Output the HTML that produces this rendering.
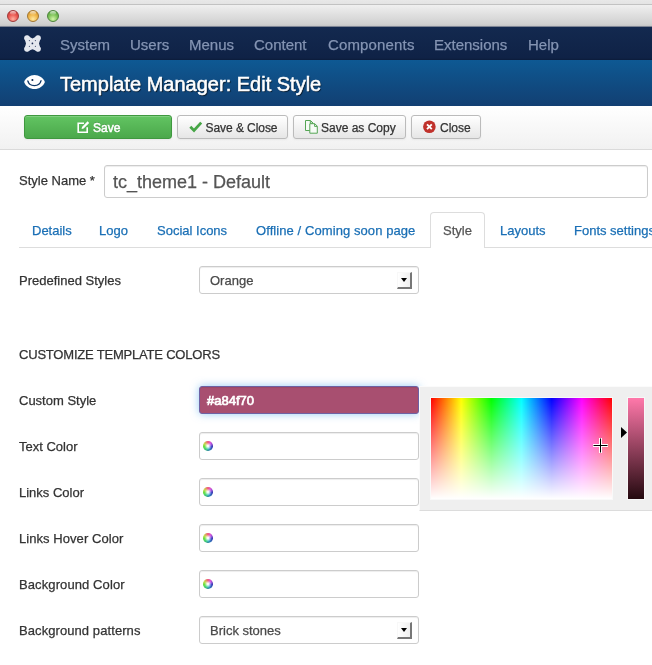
<!DOCTYPE html>
<html lang="en">
<head>
<meta charset="utf-8">
<title>Template Manager: Edit Style</title>
<style>
html,body{margin:0;padding:0;}
body{width:652px;height:665px;overflow:hidden;background:#fff;position:relative;
  font-family:"Liberation Sans",Arial,Helvetica,sans-serif;font-size:13px;color:#333;-webkit-text-stroke:.25px;}
.abs{position:absolute;}
/* mac title bar */
#titlebar{left:0;top:0;width:652px;height:26px;
  background:linear-gradient(#e8e8e8 0,#e4e4e4 3.5px,#c2c2c2 4px,#c2c2c2 4.6px,#f0f0f0 5px,#e9e9e9 9px,#d0d0d0 24px,#c6c6c6 26px);}
.tl{position:absolute;top:10px;width:12px;height:12px;border-radius:50%;box-sizing:border-box;}
.tl:after{content:"";position:absolute;left:2px;top:0;width:6px;height:4px;border-radius:50%;background:linear-gradient(rgba(255,255,255,.75),rgba(255,255,255,.05));}
#tl-r{left:7px;background:radial-gradient(circle at 50% 80%,#ffb0a0 0,#ea5750 50%,#c3342f 100%);border:1px solid #9f3a3a;}
#tl-y{left:27px;background:radial-gradient(circle at 50% 80%,#ffe9a0 0,#efb548 50%,#c98a26 100%);border:1px solid #a27630;}
#tl-g{left:47px;background:radial-gradient(circle at 50% 80%,#d4f5a8 0,#7cc257 50%,#4a9634 100%);border:1px solid #4d843c;}
/* navbar */
#navbar{left:0;top:26px;width:652px;height:34px;background:linear-gradient(#7d8494 0,#7d8494 1px,#13294f 1px,#0f2246 32px,#0b1b3a 34px);}
.nav{position:absolute;top:36px;font-size:15px;line-height:17px;color:#8494b3;white-space:nowrap;}
/* header */
#header{left:0;top:60px;width:652px;height:46px;background:linear-gradient(#0e5993,#123f72);}
#title{left:60px;top:71px;font-size:20px;line-height:26px;color:#fff;white-space:nowrap;
  text-shadow:1px 1px 1px rgba(0,0,0,.75);-webkit-text-stroke:.55px #fff;}
/* toolbar */
#toolbar{left:0;top:106px;width:652px;height:43px;background:linear-gradient(#fff,#f1f1f1);border-bottom:1px solid #dadada;box-sizing:content-box;}
.btn{position:absolute;top:115px;height:24px;box-sizing:border-box;border:1px solid #bbb;border-radius:3px;
  background:linear-gradient(#fff,#e6e6e6);font-size:12px;line-height:22px;color:#333;white-space:nowrap;
  box-shadow:inset 0 1px 0 rgba(255,255,255,.2),0 1px 2px rgba(0,0,0,.05);}
.btn span{position:absolute;top:1px;}
.btn svg{position:absolute;}
#b-save{left:24px;width:148px;background:linear-gradient(#62c462,#4ba84b);border-color:#3f983f;color:#fff;}
#b-sc{left:177px;width:111px;}
#b-copy{left:293px;width:113px;}
#b-close{left:411px;width:70px;}
/* form */
.lbl{position:absolute;left:19px;font-size:13px;line-height:18px;color:#333;white-space:nowrap;}
.inp{position:absolute;left:199px;width:220px;height:28px;box-sizing:border-box;border:1px solid #ccc;border-radius:3px;background:#fff;
  box-shadow:inset 0 1px 1px rgba(0,0,0,.075);}
.inp .val{position:absolute;left:10px;top:5px;font-size:13px;line-height:18px;color:#4a4a4a;white-space:nowrap;}
.sel-btn{position:absolute;right:6px;top:5px;width:15px;height:17px;box-sizing:border-box;background:linear-gradient(to right,#fff,#f0f0f0);
  border-right:2px solid #777;border-bottom:2px solid #777;border-top:1px solid #f8f8f8;border-left:1px solid #f8f8f8;}
.sel-btn:after{content:"";position:absolute;left:3px;top:5px;border-left:3.5px solid transparent;border-right:3.5px solid transparent;border-top:4px solid #000;}
.wheel{position:absolute;left:3px;top:8px;width:9.5px;height:9.5px;border-radius:50%;
  background:radial-gradient(circle,#fff 0,rgba(255,255,255,.9) 12%,rgba(255,255,255,0) 48%),conic-gradient(#f4577c 0,#d95be6 12%,#4f55d8 28%,#45b5d8 45%,#45d888 58%,#66e044 72%,#c8d850 85%,#f4577c 100%);
  box-shadow:inset -1px -1px 1px rgba(0,0,80,.3);}
/* tabs */
.tab{position:absolute;top:222px;font-size:13px;line-height:18px;color:#1a6fb5;white-space:nowrap;}
#tabline{left:19px;top:247px;width:633px;height:1px;background:#ddd;}
#tab-active{left:430px;top:212px;width:55px;height:36px;box-sizing:border-box;border:1px solid #ddd;border-bottom:none;border-radius:4px 4px 0 0;background:#fff;}
/* picker */
#picker{left:419px;top:386px;width:237px;height:125px;box-sizing:border-box;background:#efefef;border:1px solid;border-color:#fbfbfb #dcdcdc #dcdcdc #fbfbfb;}
#pad{left:431px;top:398px;width:181px;height:101px;box-shadow:0 0 0 1px rgba(255,255,255,.6);
  background:linear-gradient(rgba(255,255,255,0),#fff),linear-gradient(to right,#f00 0,#ff0 16.66%,#0f0 33.33%,#0ff 50%,#00f 66.66%,#f0f 83.33%,#f00 100%);}
#sld{left:628px;top:398px;width:16px;height:101px;background:linear-gradient(#ff78aa,#24090f);box-shadow:0 0 0 1px rgba(255,255,255,.5);}
</style>
</head>
<body><div id="wrap" style="position:absolute;left:0;top:0;width:652px;height:665px;will-change:transform">
<div id="titlebar" class="abs"><div id="tl-r" class="tl"></div><div id="tl-y" class="tl"></div><div id="tl-g" class="tl"></div></div>

<div id="navbar" class="abs"></div>
<svg class="abs" id="jlogo" style="left:24px;top:35px" width="17" height="17" viewBox="0 0 17 17">
  <g fill="#e4e7ee">
    <circle cx="3" cy="3" r="2.8"/><circle cx="14" cy="3" r="2.8"/><circle cx="3" cy="14" r="2.8"/><circle cx="14" cy="14" r="2.8"/>
    <path d="M3 0.4 L8.5 3.6 L14 0.4 L16.6 3 L15 8.5 L16.6 14 L14 16.6 L8.5 14.3 L3 16.6 L0.4 14 L2 8.5 L0.4 3 Z"/>
  </g>
  <g fill="#1c2c52"><circle cx="8.4" cy="8.4" r=".85"/><circle cx="5.4" cy="5.6" r=".6" opacity=".8"/><circle cx="11.4" cy="5.6" r=".6" opacity=".8"/><circle cx="5.4" cy="11.3" r=".6" opacity=".8"/><circle cx="11.4" cy="11.3" r=".6" opacity=".8"/></g>
</svg>
<div class="nav" id="n1" style="left:60px">System</div>
<div class="nav" id="n2" style="left:130px">Users</div>
<div class="nav" id="n3" style="left:189px">Menus</div>
<div class="nav" id="n4" style="left:254px">Content</div>
<div class="nav" id="n5" style="left:328px;letter-spacing:.15px">Components</div>
<div class="nav" id="n6" style="left:434px">Extensions</div>
<div class="nav" id="n7" style="left:528px">Help</div>

<div id="header" class="abs"></div>
<svg class="abs" id="eye" style="left:24px;top:75px" width="21" height="15" viewBox="0 0 21 15">
  <path d="M0.1 7 C1.6 2.9 5.9 0 10.5 0 C15.1 0 19.4 2.9 20.9 7 C19.4 11.2 15.1 14.1 10.5 14.1 C5.9 14.1 1.6 11.2 0.1 7 Z" fill="#fff"/>
  <path d="M3.1 5.3 C3.5 9.3 6.6 11.2 10.4 11.2 C14.2 11.2 17.3 9.3 17.7 5 L16.3 5.6 C15.9 8.5 13.6 10.1 10.4 10.1 C7.2 10.1 4.9 8.5 4.6 5.8 Z" fill="#0f3868"/>
  <circle cx="8.4" cy="5" r="1.05" fill="#0a2850"/>
</svg>
<div id="title" class="abs">Template Manager: Edit Style</div>

<div id="toolbar" class="abs"></div>
<div class="btn" id="b-save"><svg style="left:52px;top:5px" width="13" height="13" viewBox="0 0 13 13"><path d="M7 2.2H1.2V11.2H10.2V6.2" fill="none" stroke="#fff" stroke-width="1.6"/><path d="M10.6 0.3 L12.2 1.9 L6.6 7.6 L4.6 8 L5 6 Z" fill="#fff"/></svg><span id="t-save" style="left:68px;-webkit-text-stroke:.5px #fff;text-shadow:0 -1px 0 rgba(0,0,0,.2)">Save</span></div>
<div class="btn" id="b-sc"><svg style="left:11px;top:5px" width="14" height="12" viewBox="0 0 14 12"><path d="M1.3 5.8 L5 9.4 L12.2 1.6" fill="none" stroke="#46a546" stroke-width="2.8"/></svg><span id="t-sc" style="left:27.5px;letter-spacing:-.06px">Save &amp; Close</span></div>
<div class="btn" id="b-copy"><svg style="left:11px;top:4px" width="13" height="14" viewBox="0 0 13 14"><path d="M0.5 0.5H5.5L8 3V10.5H0.5Z" fill="#f6fbf6" stroke="#55a555" stroke-width="1"/><path d="M5.3 0.7V3.2H7.8" fill="none" stroke="#55a555" stroke-width="1"/><path d="M4.8 3.7H9.8L12.3 6.2V13.2H4.8Z" fill="#f6fbf6" stroke="#55a555" stroke-width="1"/><path d="M9.6 3.9V6.4H12.1" fill="none" stroke="#55a555" stroke-width="1"/></svg><span id="t-copy" style="left:27px">Save as Copy</span></div>
<div class="btn" id="b-close"><svg style="left:10px;top:4px" width="14" height="14" viewBox="0 0 14 14"><circle cx="7.4" cy="6.7" r="6.3" fill="#c0312b"/><path d="M5 4.3L9.8 9.1M9.8 4.3L5 9.1" stroke="#fff" stroke-width="1.9" fill="none"/></svg><span id="t-close" style="left:28px">Close</span></div>

<div class="lbl" id="l-name" style="top:172px">Style Name *</div>
<div class="inp" id="i-name" style="left:104px;top:165px;width:544px;height:33px;border-radius:3px"><span class="val" id="v-name" style="left:8px;top:5px;font-size:18px;line-height:22px;color:#555">tc_theme1 - Default</span></div>

<div id="tabline" class="abs"></div>
<div id="tab-active" class="abs"></div>
<div class="tab" id="tb1" style="left:32px">Details</div>
<div class="tab" id="tb2" style="left:99px">Logo</div>
<div class="tab" id="tb3" style="left:157px">Social Icons</div>
<div class="tab" id="tb4" style="left:256px;letter-spacing:.08px">Offline / Coming soon page</div>
<div class="tab" id="tb5" style="left:443px;color:#555">Style</div>
<div class="tab" id="tb6" style="left:500px">Layouts</div>
<div class="tab" id="tb7" style="left:574px">Fonts settings</div>

<div class="lbl" id="l1" style="top:272px">Predefined Styles</div>
<div class="inp" id="i1" style="top:266px"><span class="val">Orange</span><div class="sel-btn"></div></div>

<div class="lbl" id="l2" style="top:346px;letter-spacing:-0.2px">CUSTOMIZE TEMPLATE COLORS</div>

<div class="lbl" id="l3" style="top:392px">Custom Style</div>
<div class="inp" id="i3" style="top:386px;background:#a84f70;border-color:#6d62a4;box-shadow:inset 0 1px 1px rgba(0,0,0,.075),0 0 8px rgba(82,168,236,.6)"><span class="val" style="left:7px;top:5px;color:#fff;-webkit-text-stroke:.7px #fff">#a84f70</span></div>

<div class="lbl" id="l4" style="top:438px">Text Color</div>
<div class="inp" id="i4" style="top:432px"><div class="wheel"></div></div>
<div class="lbl" id="l5" style="top:484px">Links Color</div>
<div class="inp" id="i5" style="top:478px"><div class="wheel"></div></div>
<div class="lbl" id="l6" style="top:530px;letter-spacing:.06px">Links Hover Color</div>
<div class="inp" id="i6" style="top:524px"><div class="wheel"></div></div>
<div class="lbl" id="l7" style="top:576px;letter-spacing:.1px">Background Color</div>
<div class="inp" id="i7" style="top:570px"><div class="wheel"></div></div>
<div class="lbl" id="l8" style="top:622px;letter-spacing:.08px">Background patterns</div>
<div class="inp" id="i8" style="top:616px"><span class="val">Brick stones</span><div class="sel-btn"></div></div>

<div id="picker" class="abs"></div>
<div id="pad" class="abs"></div>
<div id="sld" class="abs"></div>
<svg class="abs" id="cross" style="left:593px;top:438px" width="15" height="15" viewBox="0 0 15 15">
  <path d="M7.5 0V15M0 7.5H15" stroke="#fff" stroke-width="3" fill="none"/>
  <path d="M7.5 0.5V14.5M0.5 7.5H14.5" stroke="#000" stroke-width="1" fill="none"/>
</svg>
<svg class="abs" id="arrow" style="left:621px;top:427px" width="7" height="11" viewBox="0 0 7 11"><path d="M0 0L6 5.5L0 11Z" fill="#000"/></svg>
</div></body>
</html>
